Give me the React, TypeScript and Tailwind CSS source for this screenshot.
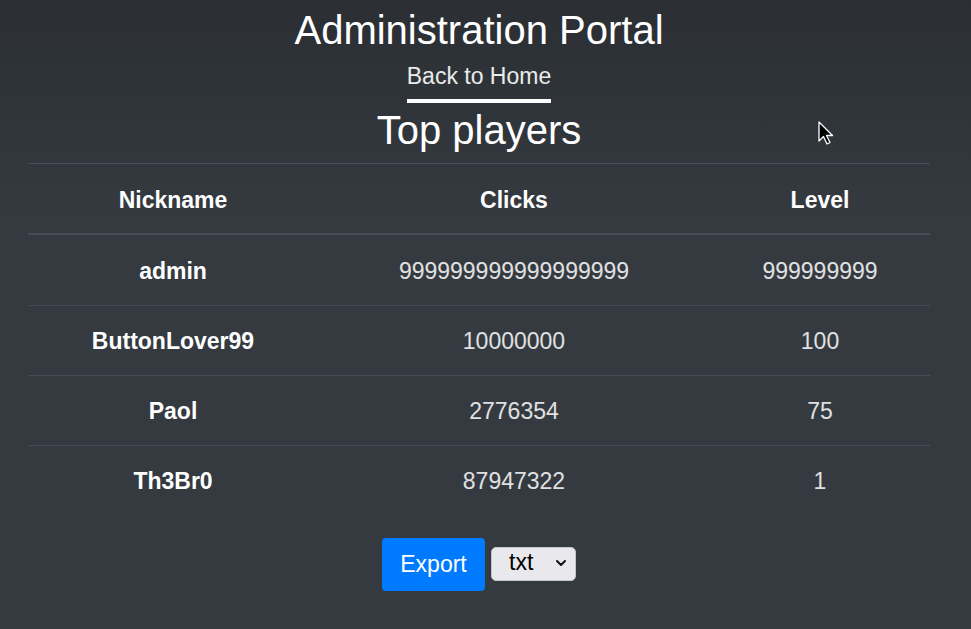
import React from 'react';

const players = [
  { nick: 'admin', clicks: '999999999999999999', level: '999999999' },
  { nick: 'ButtonLover99', clicks: '10000000', level: '100' },
  { nick: 'Paol', clicks: '2776354', level: '75' },
  { nick: 'Th3Br0', clicks: '87947322', level: '1' },
];

const Cursor: React.FC = () => (
  <svg className="absolute left-[818px] top-[121px]" width="20" height="28" viewBox="0 0 20 28">
    <path d="M1 1 L1 20 L5.5 15.5 L9 23 L12 21.5 L8.5 14.5 L14.5 14.5 Z" fill="#000" stroke="#fff" strokeWidth="1.3" strokeLinejoin="round" />
  </svg>
);

export default function App() {
  return (
    <div className="relative min-h-[629px] w-full bg-[linear-gradient(to_bottom,#2b2f34_0px,#343a40_220px)] text-white font-['Liberation_Sans',Arial,sans-serif]">
      <div className="w-[958px]">
        <div className="flex flex-col items-center">
          <h1 className="mt-[8px] text-[40px] leading-[44px]">Administration Portal</h1>
          <nav className="mt-[12px] flex flex-col items-center">
            <a className="text-[23px] leading-[24px] text-white/90">Back to Home</a>
            <div className="mt-[11px] h-[4px] w-full bg-white" />
          </nav>
          <h2 className="mt-[3px] text-[40px] leading-[48px]">Top players</h2>
        </div>

        <div className="mx-[28px] mt-[9px]">
          <table className="w-full border-collapse text-[23px]">
            <thead>
              <tr className="border-t border-[#454d55]">
                <th className="w-[290px] h-[70px] pt-[3px] font-bold border-b-2 border-[#454d55]">Nickname</th>
                <th className="w-[392px] h-[70px] pt-[3px] font-bold border-b-2 border-[#454d55]">Clicks</th>
                <th className="h-[70px] pt-[3px] font-bold border-b-2 border-[#454d55]">Level</th>
              </tr>
            </thead>
            <tbody>
              {players.map((p, i) => (
                <tr key={p.nick} className={i > 0 ? 'border-t border-[#454d55] h-[70px]' : 'h-[72px]'}>
                  <td className={`${i > 0 ? 'pt-[1px]' : 'pt-[3px]'} text-center font-bold`}>{p.nick}</td>
                  <td className={`${i > 0 ? 'pt-[1px]' : 'pt-[3px]'} text-center text-white/85`}>{p.clicks}</td>
                  <td className={`${i > 0 ? 'pt-[1px]' : 'pt-[3px]'} text-center text-white/85`}>{p.level}</td>
                </tr>
              ))}
            </tbody>
          </table>
        </div>

        <div className="mt-[22px] flex items-center justify-center gap-[6px]">
          <button className="h-[53px] w-[103px] rounded-[4px] bg-[#007bff] text-[23px] text-white">Export</button>
          <div className="flex h-[34px] w-[85px] items-center justify-between rounded-[5px] border border-[#c5c5c9] bg-[#e9e9ed] pb-[3px] pl-[17px] pr-[8px] text-[23px] text-black">
            <span>txt</span>
            <svg width="12" height="8" viewBox="0 0 12 8">
              <path d="M2 2 L6 6 L10 2" fill="none" stroke="#111" strokeWidth="2" strokeLinecap="round" strokeLinejoin="round" />
            </svg>
          </div>
        </div>
      </div>

      <Cursor />
    </div>
  );
}
